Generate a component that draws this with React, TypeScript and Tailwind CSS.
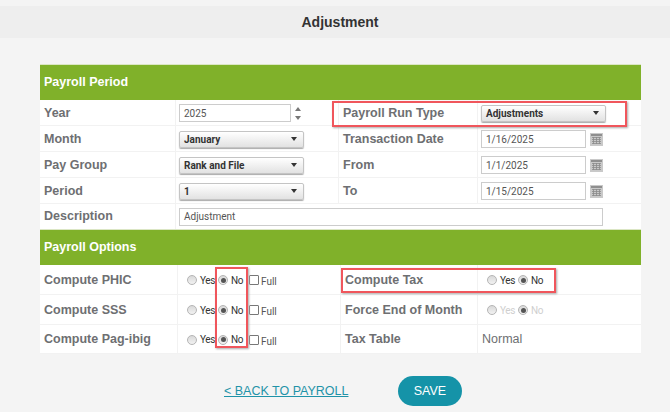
const labelClass = "text-[12.5px] font-bold text-[#6e6f72] whitespace-nowrap";
const fieldFont = "font-['Roboto',sans-serif]";

function SectionHeader({ title }: { title: string }) {
  return (
    <div className="flex h-[36px] items-center border-t border-[#dbe6c4] bg-[#80b12a] pl-[4px] text-[12.5px] font-bold text-white">
      {title}
    </div>
  );
}

function Caret() {
  return <span className="h-0 w-0 border-x-[3px] border-t-[4px] border-x-transparent border-t-[#333]" />;
}

function SelectBox({ value }: { value: string }) {
  return (
    <div className={`flex h-[17px] w-[125px] items-center justify-between rounded-[2px] border border-[#c4c4c4] bg-gradient-to-b from-white to-[#e2e2e2] pl-[4px] pr-[6px] shadow-[0_1px_1px_#aaa] ${fieldFont} text-[10px] font-bold text-[#333]`}>
      <span>{value}</span>
      <Caret />
    </div>
  );
}

function TextBox({ value, width }: { value: string; width: string }) {
  return (
    <div className={`flex h-[18px] ${width} items-center border border-[#cccccc] bg-white pl-[4px] ${fieldFont} text-[10px] text-[#555]`}>
      {value}
    </div>
  );
}

function CalendarIcon() {
  return (
    <svg width="13" height="13" viewBox="0 0 13 13" className="ml-[4px]">
      <rect width="13" height="13" fill="#c9c9c9" />
      <rect x="1" y="1" width="11" height="2" fill="#8f8f8f" />
      <path d="M2 4.5h9M2 6.5h9M2 8.5h9M2 10.5h9M3.5 4v7M6.5 4v7M9.5 4v7" stroke="#8a8a8a" strokeWidth="0.8" fill="none" />
    </svg>
  );
}

function DateField({ value }: { value: string }) {
  return (
    <div className="flex items-center">
      <TextBox value={value} width="w-[105px]" />
      <CalendarIcon />
    </div>
  );
}

function Radio({ label, on, disabled }: { label: string; on?: boolean; disabled?: boolean }) {
  return (
    <span className={`flex w-[31px] items-center ${fieldFont} text-[10px] tracking-[-0.4px] ${disabled ? "text-[#cfcfcf]" : "text-[#333]"}`}>
      <span className="flex h-[10px] w-[10px] items-center justify-center rounded-full border border-[#b5b5b5] bg-gradient-to-b from-[#d9d9d9] to-[#f2f2f2]">
        {on && <span className="h-[5px] w-[5px] rounded-full bg-[#555]" />}
      </span>
      <span className="ml-[3px]">{label}</span>
    </span>
  );
}

function YesNoFull() {
  return (
    <div className="flex items-center pl-[9px]">
      <Radio label="Yes" />
      <Radio label="No" on />
      <span className="h-[10px] w-[10px] rounded-[1px] border border-[#777] bg-white" />
      <span className={`ml-[2px] mt-[3px] ${fieldFont} text-[10px] text-[#555]`}>Full</span>
    </div>
  );
}

function YesNo({ disabled }: { disabled?: boolean }) {
  return (
    <div className="flex items-center pl-[9px]">
      <Radio label="Yes" disabled={disabled} />
      <Radio label="No" on disabled={disabled} />
    </div>
  );
}

function Row({ height, widths, cells }: { height: string; widths: string[]; cells: React.ReactNode[] }) {
  return (
    <div className={`flex ${height} border-b border-[#f2f2f2] bg-white`}>
      {cells.map((cell, i) => (
        <div key={i} className={`flex items-center border-r border-[#f2f2f2] pt-[1px] last:border-r-0 ${widths[i]} ${i === 0 || i === 2 ? "pl-[4px]" : ""}`}>
          {cell}
        </div>
      ))}
    </div>
  );
}

const periodWidths = ["w-[136px]", "w-[163px]", "w-[139px]", "w-[163px]"];
const optionWidths = ["w-[138px]", "w-[163px]", "w-[137px]", "w-[163px]"];

const periodRows = [
  { left: "Year", field: null, right: "Payroll Run Type", value: <SelectBox value="Adjustments" /> },
  { left: "Month", field: <SelectBox value="January" />, right: "Transaction Date", value: <DateField value="1/16/2025" /> },
  { left: "Pay Group", field: <SelectBox value="Rank and File" />, right: "From", value: <DateField value="1/1/2025" /> },
  { left: "Period", field: <SelectBox value="1" />, right: "To", value: <DateField value="1/15/2025" /> },
];

export default function App() {
  return (
    <div className="relative h-[412px] w-[670px] overflow-hidden bg-[#f4f4f4] pt-[6px] font-['Liberation_Sans',sans-serif]">
      <div className="flex h-[32px] items-center justify-center bg-[#eeeeee] pl-[10px] text-[14px] font-bold text-[#333]">
        Adjustment
      </div>

      <div className="ml-[40px] mt-[26px] w-[601px]">
        <SectionHeader title="Payroll Period" />
        {periodRows.map((row) => (
          <Row
            key={row.left}
            height="h-[26px]"
            widths={periodWidths}
            cells={[
              <span className={labelClass}>{row.left}</span>,
              <div className="pl-[3px]">
                {row.field ?? (
                  <div className="flex items-center">
                    <TextBox value="2025" width="w-[112px]" />
                    <div className="ml-[4px] flex flex-col gap-[5px]">
                      <span className="block h-0 w-0 border-x-[3px] border-b-[4px] border-x-transparent border-b-[#777]" />
                      <span className="block h-0 w-0 border-x-[3px] border-t-[4px] border-x-transparent border-t-[#777]" />
                    </div>
                  </div>
                )}
              </div>,
              <span className={labelClass}>{row.right}</span>,
              <div className="pl-[3px]">{row.value}</div>,
            ]}
          />
        ))}
        <div className="flex h-[25px] bg-white">
          <div className={`flex w-[136px] items-center border-r border-[#f2f2f2] pl-[4px] ${labelClass}`}>Description</div>
          <div className="flex items-center pl-[3px]">
            <TextBox value="Adjustment" width="w-[424px]" />
          </div>
        </div>

        <SectionHeader title="Payroll Options" />
        <Row
          height="h-[30px]"
          widths={optionWidths}
          cells={[
            <span className={labelClass}>Compute PHIC</span>,
            <YesNoFull />,
            <span className={labelClass}>Compute Tax</span>,
            <YesNo />,
          ]}
        />
        <Row
          height="h-[30px]"
          widths={optionWidths}
          cells={[
            <span className={labelClass}>Compute SSS</span>,
            <YesNoFull />,
            <span className={labelClass}>Force End of Month</span>,
            <YesNo disabled />,
          ]}
        />
        <Row
          height="h-[29px]"
          widths={optionWidths}
          cells={[
            <span className={labelClass}>Compute Pag-ibig</span>,
            <YesNoFull />,
            <span className={labelClass}>Tax Table</span>,
            <span className="pl-[4px] text-[12.5px] text-[#6e6f72]">Normal</span>,
          ]}
        />
      </div>

      <div className="mt-[22px] flex items-center pl-[224px]">
        <a className="w-[124px] whitespace-nowrap text-[12.5px] text-[#1f93a8] underline">&lt; BACK TO PAYROLL</a>
        <button className="ml-[50px] h-[30px] w-[64px] rounded-full bg-[#1593a8] text-[12.5px] text-white">SAVE</button>
      </div>

      {/* red annotation boxes drawn over the form */}
      <div className="absolute left-[332px] top-[101px] h-[26px] w-[295px] border-2 border-[#f0565c] shadow-[1px_1px_2px_#aaa]" />
      <div className="absolute left-[215px] top-[267px] h-[81px] w-[33px] border-2 border-[#f0565c] shadow-[1px_1px_2px_#aaa]" />
      <div className="absolute left-[341px] top-[268px] h-[25px] w-[215px] border-2 border-[#f0565c] shadow-[1px_1px_2px_#aaa]" />
    </div>
  );
}
